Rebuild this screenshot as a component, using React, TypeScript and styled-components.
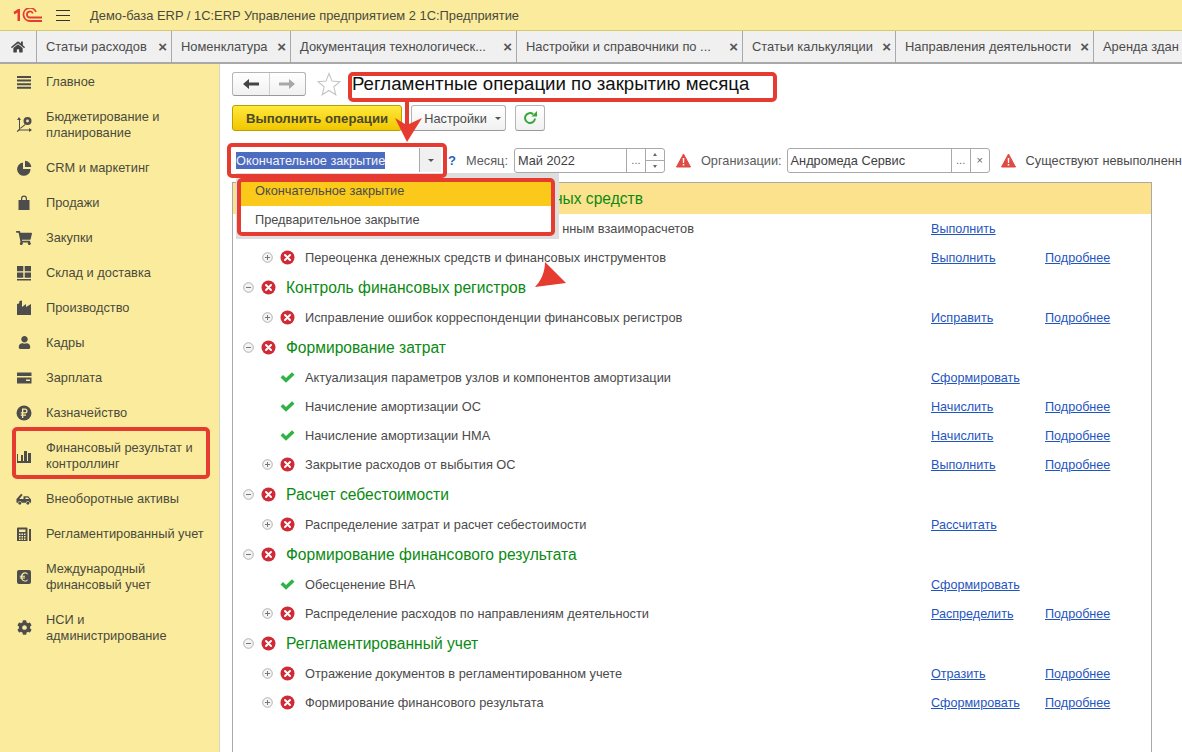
import React from 'react';
import styled, { createGlobalStyle } from 'styled-components';
import { FaCog, FaHome, FaShoppingCart, FaUser } from 'react-icons/fa';

const GlobalStyle = createGlobalStyle`
  html, body { margin: 0; padding: 0; height: 100%; overflow: hidden; background: #fff; }
  body { font-family: "Liberation Sans", Arial, sans-serif; font-size: 12.75px; color: #4b4b4b; }
`;

const RED = '#e53b31';

const Page = styled.div`
  position: relative;
  width: 1182px;
  height: 752px;
  overflow: hidden;
  display: flex;
  flex-direction: column;
`;

const TopBar = styled.div`
  height: 30px;
  flex: none;
  display: flex;
  align-items: center;
  background: #fbec9d;
  border-bottom: 1px solid #d8c86e;
  padding-left: 13px;
`;

const Burger = styled.div`
  width: 14px;
  height: 9px;
  margin: 0 20px 0 14px;
  border-top: 1px solid #333;
  border-bottom: 1px solid #333;
  position: relative;
  &::after {
    content: '';
    position: absolute;
    left: 0;
    right: 0;
    top: 4px;
    border-top: 1px solid #333;
  }
`;

const AppTitle = styled.div`
  font-size: 12.9px;
  color: #4a4a3c;
`;

const TabBar = styled.div`
  height: 31px;
  flex: none;
  display: flex;
  background: #f0f0f0;
  border-bottom: 2px solid #a9a9a9;
  overflow: hidden;
`;

const HomeTab = styled.div`
  width: 37px;
  flex: none;
  display: flex;
  align-items: center;
  justify-content: center;
  color: #444;
  font-size: 14px;
  border-right: 1px solid #a9a9a9;
  box-sizing: border-box;
`;

const Tab = styled.div<{ $w: number }>`
  width: ${(p) => p.$w}px;
  flex: none;
  box-sizing: border-box;
  padding: 0 4px 0 9px;
  display: flex;
  align-items: center;
  justify-content: space-between;
  border-right: 1px solid #a9a9a9;
  white-space: nowrap;
  color: #4b4b4b;
  font-size: 12.9px;
`;

const TabClose = styled.span`
  font-size: 15px;
  font-weight: bold;
  color: #555;
  margin-left: 6px;
`;

const Body = styled.div`
  flex: 1;
  display: flex;
  min-height: 0;
`;

const Sidebar = styled.nav`
  width: 220px;
  flex: none;
  box-sizing: border-box;
  background: #fbec9d;
  border-right: 1px solid #d5d5c5;
`;

const NavItem = styled.div<{ $tall?: boolean }>`
  height: ${(p) => (p.$tall ? 51 : 35)}px;
  display: flex;
  align-items: center;
  padding-left: 16px;
  color: #4a4a3c;
  font-size: 12.8px;
  line-height: 16px;
`;

const NavIcon = styled.span`
  width: 16px;
  height: 16px;
  flex: none;
  margin-right: 14px;
  color: #4d4d4d;
  display: flex;
  align-items: center;
  justify-content: center;
  svg { display: block; }
`;

const Main = styled.main`
  flex: 1;
  min-width: 0;
  display: flex;
  flex-direction: column;
  padding: 7px 0 0 12px;
  overflow: hidden;
`;

const TitleRow = styled.div`
  display: flex;
  align-items: center;
  height: 26px;
`;

const NavGroup = styled.div`
  display: flex;
  width: 74px;
  height: 24px;
  box-sizing: border-box;
  border: 1px solid #b5b5b5;
  border-bottom-color: #999;
  border-radius: 3px;
  background: linear-gradient(#ffffff, #f1f1f1);
`;

const NavArrow = styled.div<{ $off?: boolean }>`
  flex: 1;
  display: flex;
  align-items: center;
  justify-content: center;
  color: ${(p) => (p.$off ? '#a8a8a8' : '#444')};
  & + & { border-left: 1px solid #cfcfcf; }
`;

const Star = styled.svg`
  margin: 0 11px 0 11px;
  flex: none;
`;

const PageTitle = styled.h1`
  margin: 0;
  font-size: 18.65px;
  font-weight: normal;
  color: #111;
  white-space: nowrap;
`;

const ButtonRow = styled.div`
  display: flex;
  align-items: center;
  margin-top: 8px;
  height: 26px;
  gap: 9px;
`;

const PrimaryButton = styled.button`
  width: 170px;
  height: 26px;
  border: 1px solid #b8a000;
  border-radius: 3px;
  background: linear-gradient(#ffe93c, #f2c600);
  font: bold 13.2px "Liberation Sans", Arial, sans-serif;
  color: #4a4a2a;
  padding: 0;
`;

const PlainButton = styled.button<{ $w: number }>`
  width: ${(p) => p.$w}px;
  height: 26px;
  box-sizing: border-box;
  border: 1px solid #b5b5b5;
  border-bottom-color: #999;
  border-radius: 3px;
  background: linear-gradient(#ffffff, #f1f1f1);
  font: 12.75px "Liberation Sans", Arial, sans-serif;
  color: #4b4b4b;
  padding: 0;
  display: flex;
  align-items: center;
  justify-content: center;
`;

const SettingsButton = styled(PlainButton)`
  padding-left: 8px;
  gap: 8px;
`;

const Caret = styled.span`
  width: 0;
  height: 0;
  border-left: 3px solid transparent;
  border-right: 3px solid transparent;
  border-top: 3px solid #555;
  display: inline-block;
`;

const FormRow = styled.div`
  display: flex;
  align-items: center;
  margin-top: 17px;
  height: 24px;
  white-space: nowrap;
`;

const Combo = styled.div`
  position: relative;
  width: 209px;
  height: 24px;
  flex: none;
  box-sizing: border-box;
  margin-right: 7px;
  background: #fff;
  display: flex;
  align-items: center;
  padding-left: 4px;
`;

const Selected = styled.span`
  background: #4c6cc2;
  color: #f4f4f4;
  line-height: 17px;
`;

const ComboButton = styled.div`
  position: absolute;
  right: 0;
  top: 0;
  bottom: 0;
  width: 21px;
  background: #f0f0f0;
  border-left: 1px solid #a9a9a9;
  display: flex;
  align-items: center;
  justify-content: center;
`;

const Help = styled.span`
  color: #2a5fc0;
  font-size: 13px;
  font-weight: bold;
  margin-right: 10px;
`;

const FieldLabel = styled.span<{ $mr: number }>`
  color: #5a5a5a;
  margin-right: ${(p) => p.$mr}px;
`;

const Field = styled.div<{ $w: number }>`
  width: ${(p) => p.$w}px;
  height: 25px;
  flex: none;
  box-sizing: border-box;
  display: flex;
  border: 1px solid #a9a9a9;
  border-radius: 3px;
  background: #fff;
`;

const FieldValue = styled.div`
  flex: 1;
  padding-left: 3px;
  line-height: 23px;
  color: #3e3e3e;
`;

const FieldBtn = styled.div`
  width: 18px;
  flex: none;
  border-left: 1px solid #a9a9a9;
  display: flex;
  align-items: center;
  justify-content: center;
  color: #666;
  font-size: 11px;
`;

const Spinner = styled.div`
  width: 18px;
  flex: none;
  border-left: 1px solid #a9a9a9;
  display: flex;
  flex-direction: column;
  & > div {
    flex: 1;
    display: flex;
    align-items: center;
    justify-content: center;
  }
  & > div + div { border-top: 1px solid #a9a9a9; }
`;

const MiniUp = styled.span`
  width: 0;
  height: 0;
  border-left: 2px solid transparent;
  border-right: 2px solid transparent;
  border-bottom: 3px solid #666;
`;

const MiniDown = styled(MiniUp)`
  border-bottom: 0;
  border-top: 3px solid #666;
`;

const Warn = styled.svg<{ $ml: number; $mr: number }>`
  flex: none;
  margin-left: ${(p) => p.$ml}px;
  margin-right: ${(p) => p.$mr}px;
`;

const Panel = styled.section`
  margin-top: 10px;
  width: 920px;
  flex: 1;
  box-sizing: border-box;
  border: 1px solid #a9a9a9;
  border-bottom: 0;
  overflow: hidden;
`;

const Heading = styled.div<{ $active?: boolean }>`
  height: 31px;
  display: flex;
  align-items: center;
  padding-left: 10px;
  background: ${(p) => (p.$active ? '#fde28e' : 'transparent')};
`;

const Task = styled.div`
  height: 29px;
  display: flex;
  align-items: center;
  padding-left: 29px;
`;

const TreeSlot = styled.span`
  width: 11px;
  height: 11px;
  flex: none;
  display: flex;
  margin-right: 6px;
`;

const StatusSlot = styled.span`
  width: 16px;
  height: 16px;
  flex: none;
  margin-right: 10px;
  display: flex;
  align-items: center;
  justify-content: center;
`;

const HeadingText = styled.span<{ $w?: number }>`
  font-size: 15.6px;
  color: #0b8a12;
  white-space: nowrap;
  ${(p) => p.$w && `width: ${p.$w}px; text-align: right;`}
`;

const TaskText = styled.span<{ $w?: number }>`
  width: ${(p) => (p.$w ? p.$w : 626)}px;
  margin-right: ${(p) => (p.$w ? 626 - p.$w : 0)}px;
  flex: none;
  font-size: 12.8px;
  color: #4b4b4b;
  white-space: nowrap;
  text-align: ${(p) => (p.$w ? 'right' : 'left')};
`;

const ActionCell = styled.span`
  width: 114px;
  flex: none;
`;

const ActionLink = styled.a`
  font-size: 12.6px;
  color: #1f55c0;
  text-decoration: underline;
  white-space: nowrap;
`;

const Dropdown = styled.div`
  position: absolute;
  left: 236px;
  top: 173px;
  width: 323px;
  height: 66px;
  box-sizing: border-box;
  background: #dedede;
  padding: 9px 6px 6px 5px;
`;

const DropdownList = styled.div`
  background: #fff;
  height: 100%;
`;

const DropdownItem = styled.div<{ $on?: boolean }>`
  height: 24px;
  padding-left: 14px;
  line-height: 18px;
  color: #4b4b4b;
  background: ${(p) => (p.$on ? '#fbc91a' : '#fff')};
  margin-bottom: 5px;
`;

const Frame = styled.div<{ $x: number; $y: number; $w: number; $h: number }>`
  position: absolute;
  left: ${(p) => p.$x}px;
  top: ${(p) => p.$y}px;
  width: ${(p) => p.$w}px;
  height: ${(p) => p.$h}px;
  box-sizing: border-box;
  border: 4px solid ${RED};
  border-radius: 5px;
  pointer-events: none;
`;

const Overlay = styled.svg`
  position: absolute;
  left: 0;
  top: 0;
  pointer-events: none;
`;

const icon = { width: 16, height: 16, viewBox: '0 0 16 16', fill: 'currentColor' };

const navIcons: Record<string, React.ReactNode> = {
  main: (
    <svg {...icon}><path d="M1 2h14v2H1zM1 5.600h14v2H1zM1 9.200h14v2H1zM1 12.800h14v2H1z" /></svg>
  ),
  budget: (
    <svg {...icon}>
      <path d="M3 0l2 3H4v9.500h9V11l3 2-3 2v-1.500H3.500L1.500 15l-.8-.8L3 12V3H1z" />
      <circle cx="11.500" cy="4" r="4" />
      <path d="M4 11l5-4 .7.8-5 4z" />
      <circle cx="11.500" cy="4" r="1.400" fill="#fbec9d" />
    </svg>
  ),
  pie: (
    <svg {...icon}>
      <path d="M7 2.500A6.700 6.700 0 1 0 14.500 9H7z" />
      <path d="M9 .8V7h6.300A6.500 6.500 0 0 0 9 .8z" />
    </svg>
  ),
  bag: (
    <svg {...icon}>
      <path d="M2.500 5H5V3.500a3 3 0 0 1 6 0V5h2.500v10h-11zM6.200 5h3.600V3.500a1.800 1.800 0 0 0-3.600 0z" fillRule="evenodd" />
    </svg>
  ),
  grid: (
    <svg {...icon}>
      <path d="M1 1h6.300v5.200H1zM8.700 1H15v5.200H8.700zM1 7.500h6.300v5.200H1zM8.700 7.500H15v5.200H8.700zM1 14h14v1.500H1z" />
    </svg>
  ),
  factory: (
    <svg {...icon}>
      <path d="M1 15V4l2-.5L3.500 1 6 .5V7l4-3v3l5-3v11z" />
    </svg>
  ),
  wallet: (
    <svg {...icon}>
      <path d="M1 2.500h14.500V6H1zM1 7.500h14.500v6H1zM10 9.500v1.500h4V9.500z" fillRule="evenodd" />
    </svg>
  ),
  ruble: (
    <svg {...icon}>
      <circle cx="8" cy="8" r="7.500" />
      <path d="M6 3.500h3a2.500 2.500 0 0 1 0 5H7.300v1H10v1.200H7.300V13H6v-2.300H4.800V9.500H6v-1H4.800V7.300H6zm1.300 1.200v2.600H9a1.300 1.300 0 0 0 0-2.600z" fill="#fbec9d" fillRule="evenodd" />
    </svg>
  ),
  bars: (
    <svg {...icon}>
      <path d="M1 6h1v7h3V7h2v6h1V3h3v10h1V5h3v10H1z" />
    </svg>
  ),
  truck: (
    <svg {...icon} width={17} viewBox="0 0 17 16">
      <path d="M.5 8l5-5.500 1.500 1.200L3.500 8H8V5h5l3 3.500V12h-1.500a2 2 0 0 0-3.900 0H6a2 2 0 0 0-3.900 0H.5z" />
      <circle cx="4" cy="12.500" r="1.500" />
      <circle cx="12.600" cy="12.500" r="1.500" />
      <path d="M10 6.300h2.400L14 8h-4z" fill="#fbec9d" />
    </svg>
  ),
  calc: (
    <svg {...icon}>
      <path d="M2 1.500h8.500a1 1 0 0 1 1 1V15H1V2.500a1 1 0 0 1 1-1zM3 3.500V6h6.500V3.500zM3 7.500V9h1.500V7.500zm2.500 0V9H7V7.500zm2.500 0V9h1.500V7.500zM3 10v1.500h1.500V10zm2.500 0v1.500H7V10zm2.500 0v1.500h1.500V10zM3 12.500V14h1.500v-1.500zm2.500 0V14H7v-1.500zm2.500 0V14h1.500v-1.500z" fillRule="evenodd" />
      <path d="M13 3h2v12h-2z" />
    </svg>
  ),
  euro: (
    <svg {...icon}>
      <rect x="1" y="1" width="14" height="14" rx="2" />
      <path d="M11.500 4.300A4 4 0 0 0 5 6.700H3.800v1H5v.8H3.800v1H5.100a4 4 0 0 0 6.400 2.200v-1.400a2.800 2.800 0 0 1-5.100-.8H9v-1H6.300v-.8H9v-1H6.400a2.800 2.800 0 0 1 5.100-.8z" fill="#fbec9d" />
    </svg>
  ),
};

const nav: { label: React.ReactNode; icon: React.ReactNode; tall?: boolean }[] = [
  { label: 'Главное', icon: navIcons.main },
  { label: <>Бюджетирование и<br />планирование</>, icon: navIcons.budget, tall: true },
  { label: 'CRM и маркетинг', icon: navIcons.pie },
  { label: 'Продажи', icon: navIcons.bag },
  { label: 'Закупки', icon: <FaShoppingCart size={16} /> },
  { label: 'Склад и доставка', icon: navIcons.grid },
  { label: 'Производство', icon: navIcons.factory },
  { label: 'Кадры', icon: <FaUser size={13} /> },
  { label: 'Зарплата', icon: navIcons.wallet },
  { label: 'Казначейство', icon: navIcons.ruble },
  { label: <>Финансовый результат и<br />контроллинг</>, icon: navIcons.bars, tall: true },
  { label: 'Внеоборотные активы', icon: navIcons.truck },
  { label: 'Регламентированный учет', icon: navIcons.calc },
  { label: <>Международный<br />финансовый учет</>, icon: navIcons.euro, tall: true },
  { label: <>НСИ и<br />администрирование</>, icon: <FaCog size={15} />, tall: true },
];

const tabs = [
  { title: 'Статьи расходов', w: 135 },
  { title: 'Номенклатура', w: 119 },
  { title: 'Документация технологическ...', w: 226 },
  { title: 'Настройки и справочники по ...', w: 226 },
  { title: 'Статьи калькуляции', w: 153 },
  { title: 'Направления деятельности', w: 198 },
];

type Row =
  | { kind: 'group'; text: string; active?: boolean; clip?: number }
  | { kind: 'task'; text: string; status: 'err' | 'ok'; action: string; more?: boolean; clip?: number };

const rows: Row[] = [
  { kind: 'group', text: 'ных средств', active: true, clip: 357 },
  { kind: 'task', text: 'нным взаиморасчетов', status: 'err', action: 'Выполнить', clip: 389 },
  { kind: 'task', text: 'Переоценка денежных средств и финансовых инструментов', status: 'err', action: 'Выполнить', more: true },
  { kind: 'group', text: 'Контроль финансовых регистров' },
  { kind: 'task', text: 'Исправление ошибок корреспонденции финансовых регистров', status: 'err', action: 'Исправить', more: true },
  { kind: 'group', text: 'Формирование затрат' },
  { kind: 'task', text: 'Актуализация параметров узлов и компонентов амортизации', status: 'ok', action: 'Сформировать' },
  { kind: 'task', text: 'Начисление амортизации ОС', status: 'ok', action: 'Начислить', more: true },
  { kind: 'task', text: 'Начисление амортизации НМА', status: 'ok', action: 'Начислить', more: true },
  { kind: 'task', text: 'Закрытие расходов от выбытия ОС', status: 'err', action: 'Выполнить', more: true },
  { kind: 'group', text: 'Расчет себестоимости' },
  { kind: 'task', text: 'Распределение затрат и расчет себестоимости', status: 'err', action: 'Рассчитать' },
  { kind: 'group', text: 'Формирование финансового результата' },
  { kind: 'task', text: 'Обесценение ВНА', status: 'ok', action: 'Сформировать' },
  { kind: 'task', text: 'Распределение расходов по направлениям деятельности', status: 'err', action: 'Распределить', more: true },
  { kind: 'group', text: 'Регламентированный учет' },
  { kind: 'task', text: 'Отражение документов в регламентированном учете', status: 'err', action: 'Отразить', more: true },
  { kind: 'task', text: 'Формирование финансового результата', status: 'err', action: 'Сформировать', more: true },
];

function ErrorIcon() {
  return (
    <svg width="15" height="15" viewBox="0 0 15 15">
      <circle cx="7.500" cy="7.500" r="7" fill="#cf2a35" />
      <path d="M5 5l5 5M10 5l-5 5" stroke="#fff" strokeWidth="2" strokeLinecap="round" />
    </svg>
  );
}

function OkIcon() {
  return (
    <svg width="15" height="11" viewBox="0 0 15 11">
      <path d="M.5 5.500L3 3l3 3L12 .3l2.500 2.500L6 10.700z" fill="#2fb344" />
    </svg>
  );
}

function TreeToggle({ open }: { open?: boolean }) {
  return (
    <svg width="11" height="11" viewBox="0 0 11 11">
      <circle cx="5.500" cy="5.500" r="4.800" fill="#f4f4f4" stroke="#b0b0b0" />
      <path d={open ? 'M3 5.500h5' : 'M3 5.500h5M5.500 3v5'} stroke="#777" />
    </svg>
  );
}

function WarnIcon({ ml, mr }: { ml: number; mr: number }) {
  return (
    <Warn $ml={ml} $mr={mr} width="15" height="15" viewBox="0 0 15 15">
      <path d="M7.500 1L14.500 14H.5z" fill="#df4a43" stroke="#df4a43" strokeLinejoin="round" />
      <path d="M6.700 5h1.600l-.2 5H6.900zM6.700 11h1.600v1.600H6.700z" fill="#fff" />
    </Warn>
  );
}

export default function App() {
  return (
    <Page>
      <GlobalStyle />
      <TopBar>
        <svg width="29" height="14" viewBox="0 0 29 14" fill="none">
          <path d="M.5 4L5 1h2v12H4.500V4.500L1.500 6.500z" fill={RED} />
          <path d="M23 4A6.500 6.500 0 1 0 17 13H29" stroke={RED} strokeWidth="1.800" />
          <path d="M19.800 5.500A3 3 0 1 0 17 9.500H29" stroke={RED} strokeWidth="1.800" />
        </svg>
        <Burger />
        <AppTitle>Демо-база ERP / 1C:ERP Управление предприятием 2 1С:Предприятие</AppTitle>
      </TopBar>
      <TabBar>
        <HomeTab><FaHome /></HomeTab>
        {tabs.map((t) => (
          <Tab key={t.title} $w={t.w}>
            {t.title}
            <TabClose>×</TabClose>
          </Tab>
        ))}
        <Tab $w={120}>Аренда здан</Tab>
      </TabBar>
      <Body>
        <Sidebar>
          {nav.map((n, i) => (
            <NavItem key={i} $tall={n.tall}>
              <NavIcon>{n.icon}</NavIcon>
              <div>{n.label}</div>
            </NavItem>
          ))}
        </Sidebar>
        <Main>
          <TitleRow>
            <NavGroup>
              <NavArrow>
                <svg width="16" height="10" viewBox="0 0 16 10" fill="currentColor"><path d="M0 5l6-5v3.500h10v3H6V10z" /></svg>
              </NavArrow>
              <NavArrow $off>
                <svg width="16" height="10" viewBox="0 0 16 10" fill="currentColor"><path d="M16 5l-6-5v3.500H0v3h10V10z" /></svg>
              </NavArrow>
            </NavGroup>
            <Star width="24" height="24" viewBox="0 0 24 24" fill="none">
              <path d="M12 1.500l3 7.600 8 .6-6.200 5.100 2 8-6.800-4.300-6.800 4.300 2-8L1 9.700l8-.6z" stroke="#c4c4c4" strokeWidth="1.100" />
            </Star>
            <PageTitle>Регламентные операции по закрытию месяца</PageTitle>
          </TitleRow>
          <ButtonRow>
            <PrimaryButton>Выполнить операции</PrimaryButton>
            <SettingsButton $w={95}>Настройки<Caret /></SettingsButton>
            <PlainButton $w={30}>
              <svg width="16" height="16" viewBox="0 0 16 16" fill="none">
                <path d="M13 8.500a5 5 0 1 1-1.800-4.300" stroke="#3aa63a" strokeWidth="2" />
                <path d="M9.500 6.500h5.500V1z" fill="#3aa63a" />
              </svg>
            </PlainButton>
          </ButtonRow>
          <FormRow>
            <Combo>
              <Selected>Окончательное закрытие</Selected>
              <ComboButton><Caret /></ComboButton>
            </Combo>
            <Help>?</Help>
            <FieldLabel $mr={6}>Месяц:</FieldLabel>
            <Field $w={151}>
              <FieldValue>Май 2022</FieldValue>
              <FieldBtn>...</FieldBtn>
              <Spinner>
                <div><MiniUp /></div>
                <div><MiniDown /></div>
              </Spinner>
            </Field>
            <WarnIcon ml={11} mr={10} />
            <FieldLabel $mr={5}>Организации:</FieldLabel>
            <Field $w={203}>
              <FieldValue>Андромеда Сервис</FieldValue>
              <FieldBtn>...</FieldBtn>
              <FieldBtn>×</FieldBtn>
            </Field>
            <WarnIcon ml={11} mr={10} />
            <span>Существуют невыполненные операции</span>
          </FormRow>
          <Panel>
            {rows.map((r, i) =>
              r.kind === 'group' ? (
                <Heading key={i} $active={r.active}>
                  <TreeSlot><TreeToggle open /></TreeSlot>
                  <StatusSlot><ErrorIcon /></StatusSlot>
                  <HeadingText $w={r.clip}>{r.text}</HeadingText>
                </Heading>
              ) : (
                <Task key={i}>
                  <TreeSlot>{r.status === 'err' && <TreeToggle />}</TreeSlot>
                  <StatusSlot>{r.status === 'err' ? <ErrorIcon /> : <OkIcon />}</StatusSlot>
                  <TaskText $w={r.clip}>{r.text}</TaskText>
                  <ActionCell><ActionLink href="#">{r.action}</ActionLink></ActionCell>
                  {r.more && <ActionLink href="#">Подробнее</ActionLink>}
                </Task>
              ),
            )}
          </Panel>
        </Main>
      </Body>
      <Dropdown>
        <DropdownList>
          <DropdownItem $on>Окончательное закрытие</DropdownItem>
          <DropdownItem>Предварительное закрытие</DropdownItem>
        </DropdownList>
      </Dropdown>
      <Frame $x={348} $y={72} $w={429} $h={30} />
      <Frame $x={227} $y={143} $w={220} $h={35} />
      <Frame $x={237} $y={178} $w={318} $h={58} />
      <Frame $x={12} $y={427} $w={198} $h={52} />
      <Overlay width="1182" height="752">
        <path d="M405 102h4v22l13-6-15 24-12-24 10 6z" fill={RED} />
        <path d="M545 262l21 21-31 4c6-6 10-15 10-25z" fill={RED} />
      </Overlay>
    </Page>
  );
}
